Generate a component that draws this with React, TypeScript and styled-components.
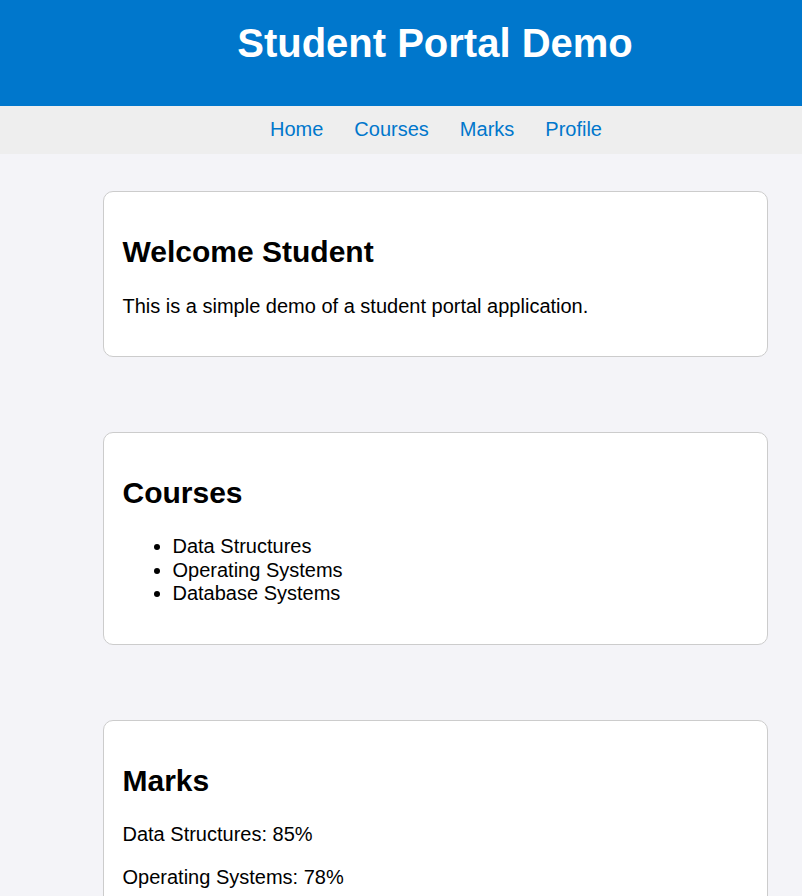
import React from "react";
import styled, { createGlobalStyle } from "styled-components";

const GlobalStyle = createGlobalStyle`
  html, body {
    margin: 0;
    padding: 0;
    background: #f4f4f8;
    font-family: "Liberation Sans", Arial, sans-serif;
    font-size: 20px;
    color: #000;
    overflow-x: hidden;
  }
`;

const Header = styled.header`
  background: #0077cc;
  color: #fff;
  padding: 20px 0 40px 68px;
  text-align: center;
`;

const Title = styled.h1`
  margin: 0;
  font-size: 40px;
  font-weight: bold;
  line-height: 46px;
`;

const Nav = styled.nav`
  background: #eeeeee;
  padding: 12px 0 13px 70px;
  text-align: center;
  line-height: 23px;
`;

const NavLink = styled.a`
  color: #0077cc;
  text-decoration: none;
  font-size: 20px;
  margin: 0 15.5px;
`;

const Main = styled.main`
  display: flex;
  flex-direction: column;
  align-items: center;
  gap: 75px;
  padding: 37px 0 40px 68px;
`;

const Card = styled.section`
  box-sizing: border-box;
  width: 665px;
  background: #fff;
  border: 1px solid #cccccc;
  border-radius: 10px;
  padding: 18px 19px;
`;

const CardTitle = styled.h2`
  font-size: 30px;
  font-weight: bold;
  margin: 25px 0;
  line-height: 34.5px;
`;

const Text = styled.p`
  margin: 20px 0;
  line-height: 23px;
`;

const List = styled.ul`
  margin: 20px 0;
  padding-left: 50px;
  line-height: 23.5px;
`;

export default function App() {
  return (
    <>
      <GlobalStyle />
      <Header>
        <Title>Student Portal Demo</Title>
      </Header>
      <Nav>
        <NavLink href="#home">Home</NavLink>
        <NavLink href="#courses">Courses</NavLink>
        <NavLink href="#marks">Marks</NavLink>
        <NavLink href="#profile">Profile</NavLink>
      </Nav>
      <Main>
        <Card id="home">
          <CardTitle>Welcome Student</CardTitle>
          <Text>This is a simple demo of a student portal application.</Text>
        </Card>
        <Card id="courses">
          <CardTitle>Courses</CardTitle>
          <List>
            <li>Data Structures</li>
            <li>Operating Systems</li>
            <li>Database Systems</li>
          </List>
        </Card>
        <Card id="marks">
          <CardTitle>Marks</CardTitle>
          <Text>Data Structures: 85%</Text>
          <Text>Operating Systems: 78%</Text>
          <Text>Database Systems: 90%</Text>
        </Card>
        <Card id="profile">
          <CardTitle>Profile</CardTitle>
          <Text>Name: Student</Text>
        </Card>
      </Main>
    </>
  );
}
